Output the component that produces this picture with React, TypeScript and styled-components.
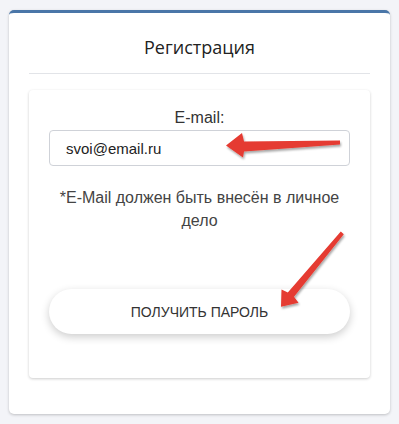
import React from "react";
import styled, { createGlobalStyle } from "styled-components";

const Global = createGlobalStyle`
  html, body {
    margin: 0;
    padding: 0;
    background: #f3f4f8;
    font-family: "Liberation Sans", Arial, sans-serif;
  }
`;

const Page = styled.div`
  position: relative;
  width: 399px;
  height: 424px;
  padding: 10px 9px 10px 9px;
  box-sizing: border-box;
`;

const Card = styled.div`
  background: #ffffff;
  border-top: 3px solid #4a76a8;
  border-radius: 5px;
  box-shadow: 0 1px 3px rgba(0, 0, 0, 0.22);
  padding: 0 20px 36px;
  height: 404px;
  box-sizing: border-box;
`;

const Title = styled.h1`
  margin: 0;
  padding: 22px 0 14px;
  font-family: "Open Sans", "Noto Sans", sans-serif;
  font-weight: 400;
  font-size: 18px;
  line-height: 24px;
  color: #222;
  text-align: center;
  border-bottom: 1px solid #e2e4e8;
`;

const Inner = styled.div`
  margin-top: 16px;
  background: #fff;
  border-radius: 4px;
  box-shadow: 0 1px 3px rgba(0, 0, 0, 0.2);
  padding: 19px 20px 44px;
  display: flex;
  flex-direction: column;
  align-items: stretch;
`;

const Label = styled.label`
  text-align: center;
  font-size: 16px;
  line-height: 18px;
  color: #333;
  margin-bottom: 3px;
`;

const Input = styled.input`
  height: 36px;
  box-sizing: border-box;
  border: 1px solid #cfd2d8;
  border-radius: 4px;
  padding: 0 16px;
  font-family: "Liberation Sans", Arial, sans-serif;
  font-size: 15px;
  color: #222;
  outline: none;
`;

const Hint = styled.p`
  margin: 20px 0 0;
  text-align: center;
  font-size: 16px;
  line-height: 23px;
  color: #444;
`;

const Button = styled.button`
  margin-top: 57px;
  height: 45px;
  border: none;
  border-radius: 23px;
  background: #fff;
  box-shadow: 0 3px 8px rgba(0, 0, 0, 0.2);
  font-family: "Liberation Sans", Arial, sans-serif;
  font-size: 14px;
  color: #333;
  cursor: pointer;
`;

const Overlay = styled.svg`
  position: absolute;
  left: 0;
  top: 0;
  width: 399px;
  height: 424px;
  pointer-events: none;
`;

export default function App() {
  return (
    <>
      <Global />
      <Page>
        <Card>
          <Title>Регистрация</Title>
          <Inner>
            <Label>E-mail:</Label>
            <Input defaultValue="svoi@email.ru" />
            <Hint>*E-Mail должен быть внесён в личное дело</Hint>
            <Button>ПОЛУЧИТЬ ПАРОЛЬ</Button>
          </Inner>
        </Card>
        <Overlay viewBox="0 0 399 424">
          <defs>
            <filter id="sh" x="-20%" y="-20%" width="140%" height="140%">
              <feDropShadow dx="1" dy="2" stdDeviation="0.8" floodColor="#000" floodOpacity="0.35" />
            </filter>
          </defs>
          <polygon
            filter="url(#sh)"
            fill="#e53a30"
            points="226,145.5 242,133 244,141.5 340,140.6 340,144.6 244,151.4 243,157.5"
          />
          <polygon
            filter="url(#sh)"
            fill="#e53a30"
            points="281,306.7 281.5,289.4 287.8,292.4 340.8,231.6 343.8,234.2 294,296.8 298.5,302.8"
          />
        </Overlay>
      </Page>
    </>
  );
}
